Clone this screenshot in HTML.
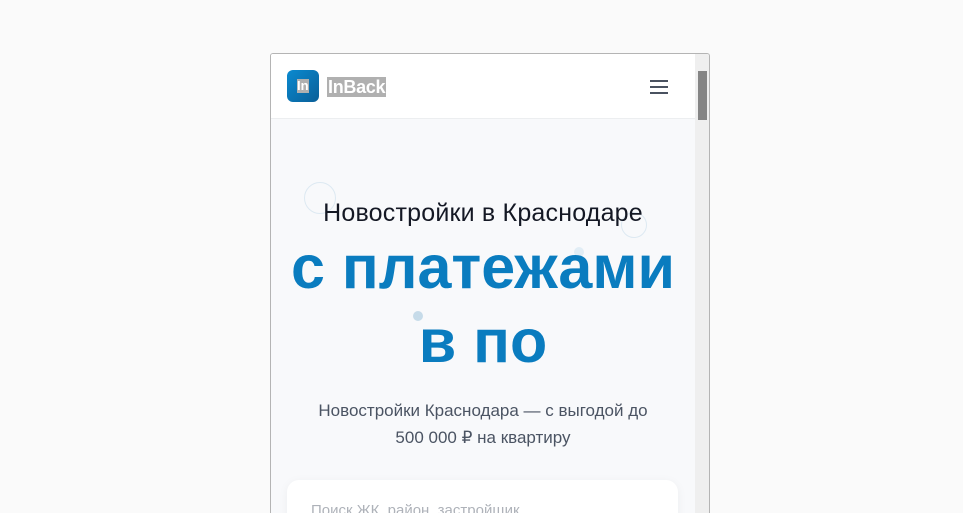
<!DOCTYPE html>
<html><head><meta charset="utf-8"><style>
html,body{margin:0;width:963px;height:513px;overflow:hidden}
body{background:#fafafa;font-family:"Liberation Sans",sans-serif;position:relative}
.frame{position:absolute;left:270px;top:53px;width:438px;height:460px;border:1px solid #b4b4b4;border-bottom:none;border-radius:3px 3px 0 0;background:#f8f9fb;overflow:hidden}
.hdr{position:absolute;left:0;top:0;width:424px;height:64px;background:#fff;border-bottom:1px solid #eceef0}
.logo{position:absolute;left:16px;top:16px;width:32px;height:32px;border-radius:6px;background:linear-gradient(135deg,#0a8ad0,#0a5f98)}
.logo span{position:absolute;left:10px;top:9px;background:#b0b0b0;color:#fff;font-weight:bold;font-size:13px;line-height:14px}
.brand{position:absolute;left:56px;top:23px;background:#b0b0b0;color:#fff;font-weight:bold;font-size:18px;line-height:20px;padding:0 1px;letter-spacing:-0.3px}
.burger{position:absolute;left:379px;top:26px;width:18px}
.burger i{display:block;height:2px;background:#4a5260;margin-bottom:4px}
.sb{position:absolute;left:424px;top:0;width:14px;height:460px;background:#efefef}
.th{position:absolute;left:427px;top:17px;width:9px;height:49px;background:#858585}
.c{position:absolute;left:0;width:424px;text-align:center}
.h1{top:145px;font-size:25px;color:#141824;font-weight:500;letter-spacing:0.2px}
.big{font-size:61px;font-weight:bold;color:#0a7cbf;line-height:62px}
.sub{top:343px;font-size:17px;color:#4b5463;line-height:27px}
.card{position:absolute;left:16px;top:426px;width:391px;height:60px;background:#fff;border-radius:12px;box-shadow:0 2px 10px rgba(0,0,0,.05)}
.card span{position:absolute;left:24px;top:22px;color:#aeb2b9;font-size:15px}
.circ{position:absolute;border:1px solid #dde9f2;border-radius:50%}
</style></head><body>
<div class="frame">
<div class="circ" style="left:33px;top:128px;width:30px;height:30px"></div>
<div class="circ" style="left:350px;top:158px;width:24px;height:24px"></div>
<div style="position:absolute;left:142px;top:257px;width:10px;height:10px;border-radius:50%;background:#c6dbe9"></div>
<div style="position:absolute;left:303px;top:193px;width:10px;height:10px;border-radius:50%;background:#e1edf5"></div>
<div class="hdr"><div class="logo"><span>In</span></div><div class="brand">InBack</div><div class="burger"><i></i><i></i><i></i></div></div>
<div class="c h1">Новостройки в Краснодаре</div>
<div class="c big" style="top:182px">с платежами</div>
<div class="c big" style="top:256px">в по</div>
<div class="c sub">Новостройки Краснодара — с выгодой до<br>500 000 ₽ на квартиру</div>
<div class="card"><span>Поиск ЖК, район, застройщик</span></div>
<div class="sb"></div><div class="th"></div>
</div>
</body></html>
